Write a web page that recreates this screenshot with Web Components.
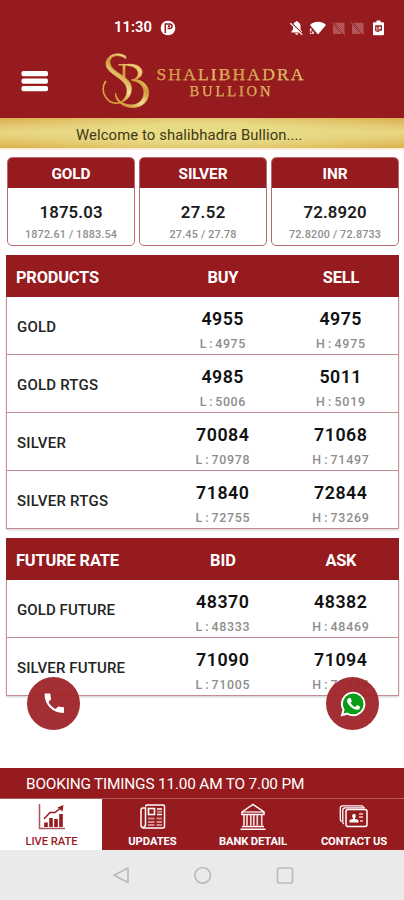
<!DOCTYPE html>
<html lang="en">
<head>
<meta charset="utf-8">
<title>Shalibhadra Bullion</title>
<style>
body{margin:0;background:#fff;font-family:Roboto,"Liberation Sans",sans-serif;--red:#961b1f}
</style>
</head>
<body>
<bullion-app></bullion-app>
<script>
// Shared canvas context used to measure natural text widths.
const ctx = document.createElement('canvas').getContext('2d');
const define = (name, html, init) => customElements.define(name, class extends HTMLElement {
  connectedCallback() {
    if (this.shadowRoot) return;
    const root = this.attachShadow({mode: 'open'});
    root.innerHTML = typeof html === 'function' ? html(this) : html;
    if (init) init(this, root);
  }
});

// A single line of text, tracked so that it spans the width given in "w".
define('track-text', '<style>:host{display:inline-block;white-space:pre;line-height:1.2}</style><slot></slot>', el => {
  const size = +el.getAttribute('size'), weight = el.getAttribute('weight') || 400;
  const family = el.getAttribute('family') || 'Roboto, "Liberation Sans", sans-serif';
  const word = +el.getAttribute('word') || 0;
  const text = el.getAttribute('text');
  el.shadowRoot.querySelector('slot').textContent = text;
  ctx.font = `${weight} ${size}px ${family}`;
  const natural = ctx.measureText(text).width + word * (text.split(' ').length - 1);
  const gap = (+el.getAttribute('w') + 1 - natural) / (text.length - 1);
  Object.assign(el.style, {font: `${weight} ${size}px/1.2 ${family}`, letterSpacing: gap + 'px', wordSpacing: word + 'px', marginRight: -gap + 'px'});
});
const t = (text, w, size, weight = 400, family = '', word = 0) =>
  `<track-text text="${text}" w="${w}" size="${size}" weight="${weight}" word="${word}" ${family ? `family='${family}'` : ''}></track-text>`;

define('status-bar', `<style>
:host{display:flex;height:54px;align-items:center;color:#fff;padding:2px 20px 0 114px;box-sizing:border-box}
.end{margin-left:auto;display:flex;align-items:center}
svg{display:block}.p{margin-left:8px}</style>
${t('11:30', 37, 14.8, 600)}
<svg class="p" width="16" height="16" viewBox="0 0 16 16"><circle cx="8" cy="8" r="7.3" fill="#fff"/><path d="M5.3 13V4h4.3c3.3 0 3.3 4.5 0 4.500H7.5" fill="none" stroke="#961b1f" stroke-width="1.5"/><path d="M8 5.2h2v2H8z" fill="#961b1f"/></svg>
<div class="end"><svg width="96" height="16" viewBox="0 0 96 16">
<path d="M3.500 12.500v-1.200L5 9.800V6c0-2.200 1-3.500 2.700-4 0-1.500 2-1.500 2 0 1.800.5 2.800 2 2.800 4v3.800l1.500 1.500v1.200zM7.200 13.200h3c0 2-3 2-3 0z" fill="#fff"/><path d="M3 2.500l12 12" stroke="#961b1f" stroke-width="1.6"/><path d="M2.300 3.300l12 11.500" stroke="#fff" stroke-width="1.200"/>
<path d="M22 5c4.500-4.300 11.500-4.300 16 0L30 14.600z" fill="#fff"/><path d="M22.700 8.500v3m0 1.200v1.200M25 11.500v2.500" stroke="#fff" stroke-width="1.500"/>
<path d="M46.500 2.700h10v11.500zM45 4.500L54.500 14H45z" fill="#b25458"/><path d="M44 2.500l13 12" stroke="#b9696b"/>
<path d="M65.500 2.700h10v11.500zM64 4.500L73.500 14H64z" fill="#b25458"/><path d="M63 2.500l13 12" stroke="#b9696b"/>
<path d="M86 2.200h2.500V.5h4v1.700H95q1 0 1 1v11q0 1-1 1H86q-1 0-1-1v-11q0-1 1-1z" fill="#fff"/><path d="M87.800 6h5.500v4h-2l-1 1.500-2.500-1zM90 6v4" stroke="#961b1f" stroke-width="1.300" fill="none"/></svg></div>`);

define('brand-bar', `<style>
:host{display:flex;height:64px;padding-left:21px;box-sizing:border-box}
svg{display:block}.menu{margin-top:16px}.logo{margin:-4px 0 0 51px}
.name{width:150px;margin-left:3px;padding-top:10px;display:flex;flex-direction:column;align-items:center;
color:transparent;background:linear-gradient(100deg,#d8a04b,#cf9545 22%,#e6bd6a 38%,#cf9545 55%,#d9ba64 75%,#dcc270);background-clip:text;-webkit-background-clip:text;-webkit-text-stroke:.25px #d9ab58}
.name>:last-child{margin-top:-2px}</style>
<svg class="menu" width="28" height="23" viewBox="0 0 28 23" fill="#fff"><rect x=".5" y="1" width="26.500" height="5.300" rx="1.800"/><rect x=".5" y="8.500" width="26.500" height="5.300" rx="1.800"/><rect x=".5" y="16" width="26.500" height="5.300" rx="1.800"/></svg>
<svg class="logo" width="52" height="60" viewBox="100 50 52 60" fill="none" stroke="url(#g)" stroke-linecap="round">
<defs><linearGradient id="g" gradientUnits="userSpaceOnUse" x1="103" y1="105" x2="145" y2="55"><stop stop-color="#d79c36"/><stop offset=".25" stop-color="#d9a23c"/><stop offset=".4" stop-color="#f3df94"/><stop offset=".58" stop-color="#cf9c35"/><stop offset=".75" stop-color="#eed078"/><stop offset="1" stop-color="#d5a642"/></linearGradient></defs>
<path fill="url(#g)" stroke-width=".6" d="M126 56.500C121 51.500 106 53 106 64C106 74 126 78 127 89C127.500 96 124 100 119 103C127 101 131.500 96 131.500 88C131.500 76 111 73 110 63C109.300 55 119 53.500 125.500 58.500z"/>
<path d="M120 102.500C108 106 99 92 105.500 81.500" stroke-width="1.600"/>
<path d="M124 65V77" stroke-width="2.600"/><path d="M119 64.700H130" stroke-width="1.500"/>
<path fill="url(#g)" stroke-width=".8" d="M128 64.300C146 63 146 79 132 80C141 78 141 66.500 128 65.500z"/>
<path fill="url(#g)" stroke-width=".8" d="M132 79.500C154 78 154 107 133 107.500C123 107.500 114.500 101 115.500 93C117 101 124 105 132 105C147 104.500 149 82 132 80.500z"/></svg>
<div class="name">${t('SHALIBHADRA', 146, 17.6, 400, '"Liberation Serif",serif')}${t('BULLION', 80, 14.6, 400, '"Liberation Serif",serif')}</div>`);

define('welcome-strip', `<style>:host{display:block;box-sizing:border-box;height:32px;padding:7px 0 0 76px;border-bottom:2px solid #fbeed8;color:#423817;
background:radial-gradient(ellipse 58% 75% at 50% 50%,#e8db86 35%,transparent),linear-gradient(#dcae52,#e8d582 48%,#dcb24d)}</style>${t('Welcome to shalibhadra Bullion....', 225.5, 14.8)}`);

define('spot-card', el => `<style>
:host{display:block;height:89px;box-sizing:border-box;border:1px solid #b8686e;border-radius:5px;overflow:hidden;text-align:center;background:#fff}
div{display:flex;justify-content:center;align-items:center}
.h{height:31px;margin:-1px -1px 0;padding-top:3px;box-sizing:border-box;background:var(--red);color:#fff}
.v{height:20px;margin-top:14px;color:#1c1c1c}.r{height:14px;margin-top:6px;color:#8f8f8f}</style>
<div class="h">${t(el.dataset.name, el.dataset.nw, 15.4, 700)}</div><div class="v">${t(el.dataset.value, el.dataset.vw, 16.8, 600)}</div><div class="r">${t(el.dataset.range, el.dataset.rw, 10.8, 500)}</div>`);

define('rate-row', el => {
  const [name, nw, a, l, b, h] = el.dataset.row.split('|');
  const five = a.length > 4;
  return `<style>:host{display:grid;grid-template-columns:156px 118px 118px;height:58px;border-bottom:1px solid #c58c91;box-sizing:border-box}
.n{padding:20px 0 0 10px;color:#242424}.c{display:flex;flex-direction:column;align-items:center;padding:11px 0 0 1px;color:#111}
.s{color:#8d8d8d;margin-top:8px;line-height:0}</style>
<div class="n">${t(name, nw, 15, 500)}</div>
<div class="c">${t(a, five ? 52 : 41, 17.8, 600)}<span class="s">${t('L : ' + l, five ? 53 : 44.5, 12.4, 500, '', -1.4)}</span></div>
<div class="c">${t(b, five ? 52 : 41, 17.8, 600)}<span class="s">${t('H : ' + h, five ? 55.5 : 48, 12.4, 500, '', -1.4)}</span></div>`;
});

define('rate-table', el => {
  const [n, nw, a, aw, b, bw] = el.dataset.head.split('|');
  return `<style>:host{display:block;box-sizing:border-box}
.h{height:42px;background:var(--red);color:#fff;display:grid;grid-template-columns:157px 118px 118px;align-items:center;justify-items:center;padding:3px 0 0 1px;box-sizing:border-box}
.h>:first-child{justify-self:start;margin-left:9px}
.b{border:solid #c79599;border-width:0 1px;box-shadow:0 1px 2px #0003}</style>
<div class="h">${t(n, nw, 16.4, 700)}${t(a, aw, 16.4, 700)}${t(b, bw, 16.4, 700)}</div><div class="b"><slot></slot></div>`;
});

define('round-button', `<style>:host{display:flex;width:53px;height:53px;border-radius:50%;background:#9e2429f2;align-items:center;justify-content:center}</style><slot></slot>`);

define('tab-item', el => `<style>:host{display:flex;flex-direction:column;align-items:center;color:#fff;background:var(--red);padding:4px 0 0 1px;box-sizing:border-box}
:host([active]){color:var(--red);background:#fff}.l{margin-top:4px;line-height:0}</style><slot></slot><span class="l">${t(el.dataset.label, el.dataset.w, 11.2, el.hasAttribute('active') ? 500 : 700)}</span>`);

define('system-nav', `<style>:host{display:flex;height:50px;background:#eaeaea;align-items:center;justify-content:center}svg{display:block}</style>
<svg width="180" height="20" viewBox="112 865 180 20" preserveAspectRatio="none" overflow="visible" fill="none" stroke="#bcbcbc" stroke-width="1.700" stroke-linejoin="round"><path d="M128 868V882.500L114 875.300Z"/><circle cx="202.700" cy="875.300" r="7.800"/><rect x="277.500" y="868" width="15" height="15" rx="2"/></svg>`);

define('bullion-app', `<style>
:host{display:flex;flex-direction:column;width:404px;height:900px;position:relative;background:#fff;overflow:hidden}
header,.book{background:var(--red)}
.cards{display:grid;grid-template-columns:128px 128px 128px;column-gap:4px;padding:7px 6px 0 7px}
.t1{margin:9px 5px 0 6px}.t2{margin:9px 5px 0 6px}
.book{height:31px;margin-top:auto;color:#fff;padding:6px 0 0 26px;box-sizing:border-box;border-bottom:1px solid #b75b5d}
.tabs{display:grid;grid-template-columns:102px 100px 101px 101px;height:51px}
round-button{position:absolute;top:677px}.call{left:27px}.wa{left:326px}svg{display:block}</style>
<header><status-bar></status-bar><brand-bar></brand-bar></header>
<welcome-strip></welcome-strip>
<div class="cards">
<spot-card data-name="GOLD" data-nw="38" data-value="1875.03" data-vw="62" data-range="1872.61 / 1883.54" data-rw="91"></spot-card>
<spot-card data-name="SILVER" data-nw="48" data-value="27.52" data-vw="43.500" data-range="27.45 / 27.78" data-rw="66"></spot-card>
<spot-card data-name="INR" data-nw="24" data-value="72.8920" data-vw="62" data-range="72.8200 / 72.8733" data-rw="91"></spot-card></div>
<rate-table class="t1" data-head="PRODUCTS|82|BUY|30|SELL|35.5">
<rate-row data-row="GOLD|38|4955|4975|4975|4975"></rate-row>
<rate-row data-row="GOLD RTGS|80|4985|5006|5011|5019"></rate-row>
<rate-row data-row="SILVER|48|70084|70978|71068|71497"></rate-row>
<rate-row data-row="SILVER RTGS|90|71840|72755|72844|73269"></rate-row></rate-table>
<rate-table class="t2" data-head="FUTURE RATE|102|BID|25|ASK|30">
<rate-row data-row="GOLD FUTURE|97|48370|48333|48382|48469"></rate-row>
<rate-row data-row="SILVER FUTURE|107|71090|71005|71094|71174"></rate-row></rate-table>
<div class="book">${t('BOOKING TIMINGS 11.00 AM TO 7.00 PM', 278, 15.4)}</div>
<div class="tabs">
<tab-item active data-label="LIVE RATE" data-w="51"><svg width="28" height="28" viewBox="0 0 28 28" fill="none" stroke="#961b1f"><path d="M1.500 1V25.500H27" stroke-width="1.500" stroke="#b0565a"/><path d="M8 24V19.500M13 24V15M18 24V16M23 24V11" stroke-width="3.600"/><path d="M6 16L12 9.500H17L22 5.500" stroke-width="1.500"/><path d="M19.500 4.500L25.500 2 24.500 8.500z" fill="#961b1f" stroke="none"/></svg></tab-item>
<tab-item data-label="UPDATES" data-w="47.500"><svg width="28" height="28" viewBox="0 0 28 28" fill="none" stroke="#fff"><path d="M6.500 3.500q0-1.500 1.500-1.500H24q1.500 0 1.500 1.500V23.500q0 1.500-1.500 1.500H5Q2 25 2 22V7q0-2 2-2h2.500V21.500q0 2-2 2" stroke-width="1.500"/><rect x="9.500" y="5.500" width="6" height="6" stroke-width="1.600"/><path d="M18 6H23M18 11.500H23" stroke-width="1.500"/><path d="M18 8.800H23M9 15.500H15.500M17.500 15.500H23M9 19H15.500M17.500 19H23M9 22H15.500M17.500 22H23" stroke-width="2" stroke="#d08a8d"/></svg></tab-item>
<tab-item data-label="BANK DETAIL" data-w="67"><svg width="28" height="28" viewBox="0 0 28 28" fill="none" stroke="#fff"><path d="M3 9L14 1.500 25 9V11.500H3z" stroke-width="1.500"/><path d="M3 9H25" stroke-width="1.200"/><path d="M5 12V22.500M8 12V22.500M11.800 12V22.500M14.800 12V22.500M18.300 12V22.500M22.700 12V22.500" stroke-width="1.700" stroke="#f3dada"/><path d="M3 23.500H25M1.500 26.300H26.500" stroke-width="1.500"/></svg></tab-item>
<tab-item data-label="CONTACT US" data-w="65.500"><svg width="30" height="28" viewBox="0 0 30 28" fill="none" stroke="#fff"><rect x="7" y="6.500" width="21" height="17" rx="2" stroke-width="1.500"/><path d="M4.800 21Q3.800 20.500 3.800 19V7Q3.800 4.800 6 4.800H26M2.800 18.500Q1.300 18 1.300 16.500V5Q1.300 2.800 3.500 2.800H22.500Q24 2.800 24.500 4" stroke-width="1.300"/><path d="M10.500 19.500v-2q0-1 3.500-1.500v-1c-3.500-5.500 5.500-5.500 2 0v1q3.500.5 3.500 1.500v2z" fill="#fff" stroke="none"/><path d="M20 11H24M20 14H24M21 18H24" stroke-width="1.700" stroke="#edcccc"/></svg></tab-item>
</div>
<system-nav></system-nav>
<round-button class="call"><svg width="26" height="26" viewBox="-.3 .7 26 26" fill="#fff"><path transform="scale(1.08)" d="M6.620 10.790c1.440 2.830 3.760 5.140 6.590 6.590l2.200-2.200c.27-.27.67-.36 1.020-.24 1.120.37 2.330.57 3.570.57.550 0 1 .45 1 1V20c0 .55-.45 1-1 1C10.610 21 3 13.390 3 4c0-.55.45-1 1-1h3.500c.55 0 1 .45 1 1 0 1.250.2 2.450.57 3.570.11.35.03.74-.25 1.020z"/></svg></round-button>
<round-button class="wa"><svg width="28" height="28" viewBox="0 0 28 28"><path d="M1.500 26.500L3.500 20A12.200 12.200 0 1 1 8.300 24.700z" fill="#fff"/><circle cx="14.200" cy="13.900" r="10.300" fill="#0b9c17"/><path d="M4.500 23.600L6 18.500 9.500 22.300z" fill="#0b9c17"/><path d="M9.200 8.500c1-1.200 2-1 2.400-.2l1.200 2.700c.2.600-.9 1.600-1.100 1.900 1.100 2 2.500 3.300 4.700 4.100l1.500-1.700c.4-.4.900 0 3 1.100.8.500-.2 2.500-1.300 3-2.200 1-5.500-.5-7.700-2.500-2.300-2.100-5.500-5.700-2.700-8.400z" fill="#fff"/></svg></round-button>`);
</script>
</body>
</html>
